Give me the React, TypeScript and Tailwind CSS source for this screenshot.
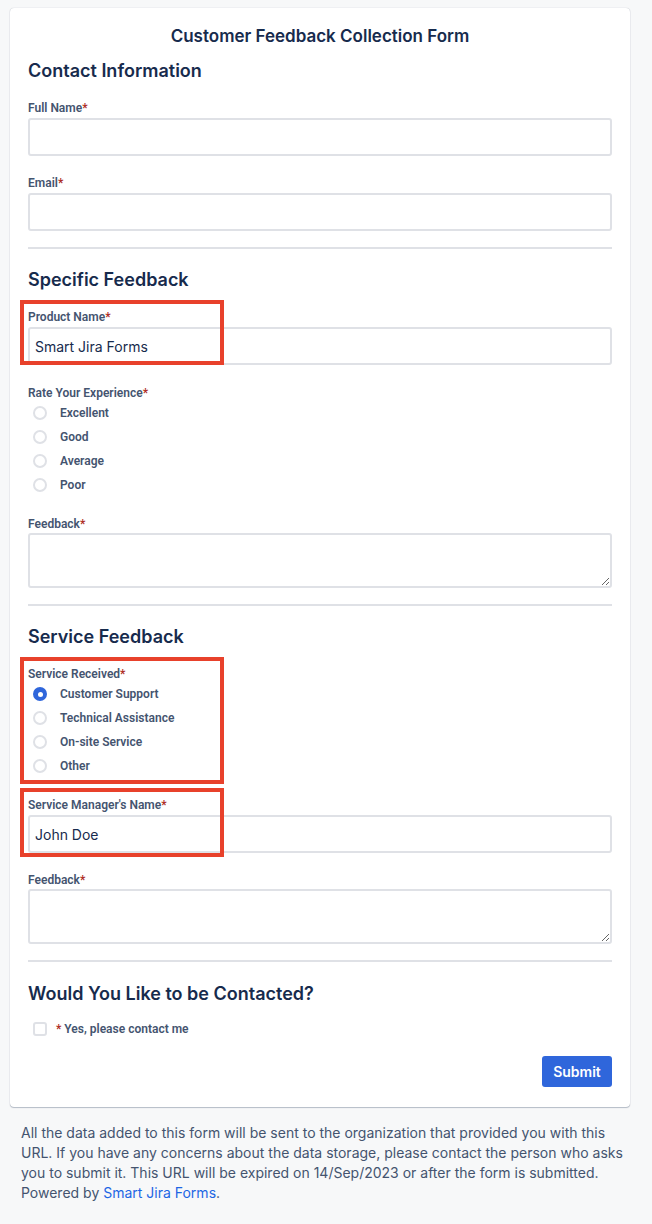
import React from "react";

const font = { fontFamily: "Inter, 'Noto Sans', sans-serif" };
const labelFont = { fontFamily: "Roboto, 'Liberation Sans', sans-serif" };

function Label({ text }: { text: string }) {
  return (
    <div style={labelFont} className="pt-[1px] text-[12px] leading-4 font-semibold text-[#44546f]">
      {text}
      <span className="text-[#ae2e24]">*</span>
    </div>
  );
}

function Input({ value }: { value?: string }) {
  return (
    <input
      readOnly
      value={value ?? ""}
      className="mt-[2px] block w-full h-[38px] rounded-[3px] border-2 border-[#dfe1e6] bg-white px-[5px] text-[14px] text-[#172b4d] outline-none"
    />
  );
}

function TextArea() {
  return (
    <textarea
      readOnly
      className="mt-[1px] block w-full h-[55px] rounded-[3px] border-2 border-[#dfe1e6] bg-white px-[6px] text-[14px] text-[#172b4d] outline-none"
    />
  );
}

function Radio({ label, checked }: { label: string; checked?: boolean }) {
  return (
    <div className="flex h-6 items-center">
      {checked ? (
        <span className="ml-[5px] flex h-[14px] w-[14px] items-center justify-center rounded-full bg-[#2f66db]">
          <span className="h-[5px] w-[5px] rounded-full bg-white" />
        </span>
      ) : (
        <span className="ml-[5px] h-[14px] w-[14px] rounded-full border-2 border-[#dfe1e6] bg-white" />
      )}
      <span style={labelFont} className="ml-[13px] text-[12px] font-semibold text-[#44546f]">
        {label}
      </span>
    </div>
  );
}

function SectionHeading({ text }: { text: string }) {
  return <h2 className="text-[18px] leading-7 font-semibold text-[#172b4d]">{text}</h2>;
}

function Divider() {
  return <div className="h-[2px] bg-[#dfe1e6]" />;
}

function RedBox({ h }: { h: string }) {
  return <div className={`pointer-events-none absolute -left-2 -top-2 w-[204px] border-4 border-[#e8412b] ${h}`} />;
}

export default function App() {
  return (
    <div style={font} className="min-h-screen bg-[#f7f8f9] pt-2">
      <div className="mx-[10px] w-[620px] rounded-[4px] bg-white px-[18px] pt-[16px] pb-[20px] shadow-[0_1px_1px_rgba(9,30,66,0.25),0_0_1px_rgba(9,30,66,0.31)]">
        <h1 className="text-center text-[17px] leading-6 font-semibold text-[#172b4d]">
          Customer Feedback Collection Form
        </h1>

        <div className="mt-[9px]">
          <SectionHeading text="Contact Information" />
        </div>
        <div className="mt-[14px]">
          <Label text="Full Name" />
          <Input />
        </div>
        <div className="mt-[18px]">
          <Label text="Email" />
          <Input />
        </div>
        <div className="mt-[16px]">
          <Divider />
        </div>

        <div className="mt-[17px]">
          <SectionHeading text="Specific Feedback" />
        </div>
        <div className="relative mt-[14px]">
          <RedBox h="h-[65px]" />
          <Label text="Product Name" />
          <Input value="Smart Jira Forms" />
        </div>
        <div className="mt-[19px]">
          <Label text="Rate Your Experience" />
          <div>
            <Radio label="Excellent" />
            <Radio label="Good" />
            <Radio label="Average" />
            <Radio label="Poor" />
          </div>
        </div>
        <div className="mt-[18px]">
          <Label text="Feedback" />
          <TextArea />
        </div>
        <div className="mt-[16px]">
          <Divider />
        </div>

        <div className="mt-[17px]">
          <SectionHeading text="Service Feedback" />
        </div>
        <div className="relative mt-[14px]">
          <RedBox h="h-[127px]" />
          <Label text="Service Received" />
          <div>
            <Radio label="Customer Support" checked />
            <Radio label="Technical Assistance" />
            <Radio label="On-site Service" />
            <Radio label="Other" />
          </div>
        </div>
        <div className="relative mt-[18px]">
          <RedBox h="h-[69px]" />
          <Label text="Service Manager's Name" />
          <Input value="John Doe" />
        </div>
        <div className="mt-[18px]">
          <Label text="Feedback" />
          <TextArea />
        </div>
        <div className="mt-[16px]">
          <Divider />
        </div>

        <div className="mt-[18px]">
          <SectionHeading text="Would You Like to be Contacted?" />
        </div>
        <div className="mt-[9px] flex h-6 items-center">
          <span className="ml-[5px] h-[14px] w-[14px] rounded-[3px] border-2 border-[#dfe1e6] bg-white" />
          <span style={labelFont} className="ml-[9px] text-[12px] font-semibold text-[#44546f]">
            <span className="text-[#ae2e24]">*</span> Yes, please contact me
          </span>
        </div>
        <div className="mt-[15px] flex justify-end">
          <button className="h-[31px] w-[70px] rounded-[3px] bg-[#2f66db] text-[14px] font-semibold text-white">
            Submit
          </button>
        </div>
      </div>

      <p className="px-[21px] pt-[16px] pb-6 text-[14px] leading-5 text-[#44546f]">
        All the data added to this form will be sent to the organization that provided you with this
        URL. If you have any concerns about the data storage, please contact the person who asks you
        to submit it. This URL will be expired on 14/Sep/2023 or after the form is submitted. Powered
        by <a className="text-[#1d66e4]">Smart Jira Forms</a>.
      </p>
    </div>
  );
}
